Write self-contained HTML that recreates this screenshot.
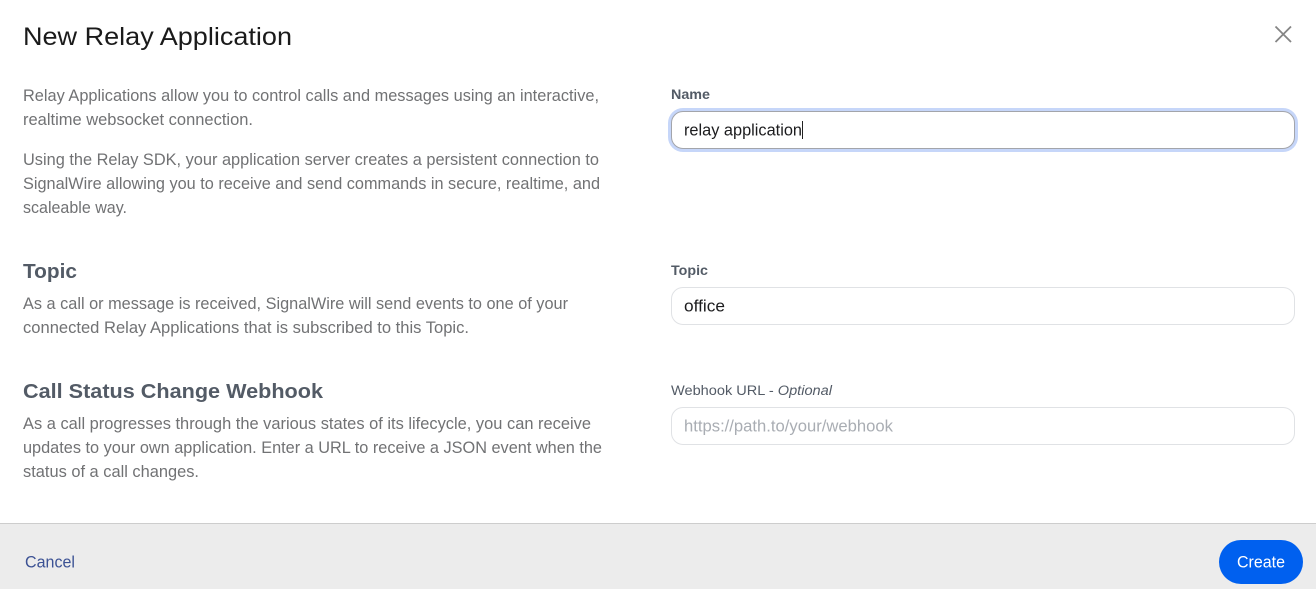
<!DOCTYPE html>
<html lang="en">
<head>
<meta charset="utf-8">
<title>New Relay Application</title>
<style>
html,body{margin:0;padding:0;width:1316px;height:589px;overflow:hidden;background:#fff;font-family:"Liberation Sans",sans-serif}
.box{position:absolute;box-sizing:border-box;left:671px;width:624px;height:38px;border-radius:12px;background:#fff;border:1px solid #e0e2e5}
#name{top:111px;border-color:#a3a5ab;box-shadow:0 0 0 3px #c6d6f9}
#topic{top:287px}
#hook{top:407px}
#foot{position:absolute;left:0;top:523px;width:1316px;height:66px;box-sizing:border-box;background:#ececec;border-top:1px solid #cdcdcd}
#btn{position:absolute;left:1219px;top:540px;width:84px;height:44px;border-radius:22px;background:#0060ef}
#caret{position:absolute;left:802px;top:121px;width:1px;height:18px;background:#222}
svg{position:absolute;left:0;top:0}
text{font-family:"Liberation Sans",sans-serif;font-size:16.500px}
.p{fill:#717274}
.h{fill:#535b66;font-weight:700;font-size:20.500px}
.l{fill:#535b66;font-weight:700;font-size:13.500px}
.v{fill:#1c1c1e}
</style>
</head>
<body>
<div class="box" id="name"></div>
<div class="box" id="topic"></div>
<div class="box" id="hook"></div>
<div id="caret"></div>
<div id="foot"></div>
<div id="btn"></div>
<svg width="1316" height="589" viewBox="0 0 1316 589" xmlns="http://www.w3.org/2000/svg">
<text x="23" y="45" textLength="269" lengthAdjust="spacingAndGlyphs" style="font-size:25px;fill:#1a1a1a">New Relay Application</text>
<path d="M1275.500 26.500 L1291 42 M1291 26.500 L1275.500 42" stroke="#858585" stroke-width="1.800" fill="none"/>

<text class="p" x="23" y="101" textLength="576" lengthAdjust="spacingAndGlyphs">Relay Applications allow you to control calls and messages using an interactive,</text>
<text class="p" x="23" y="125" textLength="230" lengthAdjust="spacingAndGlyphs">realtime websocket connection.</text>
<text class="p" x="23" y="165" textLength="576" lengthAdjust="spacingAndGlyphs">Using the Relay SDK, your application server creates a persistent connection to</text>
<text class="p" x="23" y="189" textLength="577" lengthAdjust="spacingAndGlyphs">SignalWire allowing you to receive and send commands in secure, realtime, and</text>
<text class="p" x="23" y="213" textLength="104" lengthAdjust="spacingAndGlyphs">scaleable way.</text>

<text class="h" x="23" y="278" textLength="54" lengthAdjust="spacingAndGlyphs">Topic</text>
<text class="p" x="23" y="309" textLength="545" lengthAdjust="spacingAndGlyphs">As a call or message is received, SignalWire will send events to one of your</text>
<text class="p" x="23" y="333" textLength="446" lengthAdjust="spacingAndGlyphs">connected Relay Applications that is subscribed to this Topic.</text>

<text class="h" x="23" y="398" textLength="300" lengthAdjust="spacingAndGlyphs">Call Status Change Webhook</text>
<text class="p" x="23" y="429" textLength="568" lengthAdjust="spacingAndGlyphs">As a call progresses through the various states of its lifecycle, you can receive</text>
<text class="p" x="23" y="453" textLength="579" lengthAdjust="spacingAndGlyphs">updates to your own application. Enter a URL to receive a JSON event when the</text>
<text class="p" x="23" y="477" textLength="176" lengthAdjust="spacingAndGlyphs">status of a call changes.</text>

<text class="l" x="671" y="99" textLength="39" lengthAdjust="spacingAndGlyphs">Name</text>
<text class="v" x="684" y="135.500" textLength="118" lengthAdjust="spacingAndGlyphs">relay application</text>
<text class="l" x="671" y="275" textLength="37" lengthAdjust="spacingAndGlyphs">Topic</text>
<text class="v" x="684" y="311.500" textLength="41" lengthAdjust="spacingAndGlyphs">office</text>
<text x="671" y="395" textLength="161" lengthAdjust="spacingAndGlyphs" style="font-size:13.500px;fill:#535b66">Webhook URL - <tspan font-style="italic">Optional</tspan></text>
<text x="684" y="431.500" textLength="209" lengthAdjust="spacingAndGlyphs" style="fill:#a9adb3">https://path.to/your/webhook</text>

<text x="25" y="567.500" textLength="50" lengthAdjust="spacingAndGlyphs" style="fill:#3c5294">Cancel</text>
<text x="1237" y="567.500" textLength="48" lengthAdjust="spacingAndGlyphs" style="fill:#fff">Create</text>
</svg>
</body>
</html>
